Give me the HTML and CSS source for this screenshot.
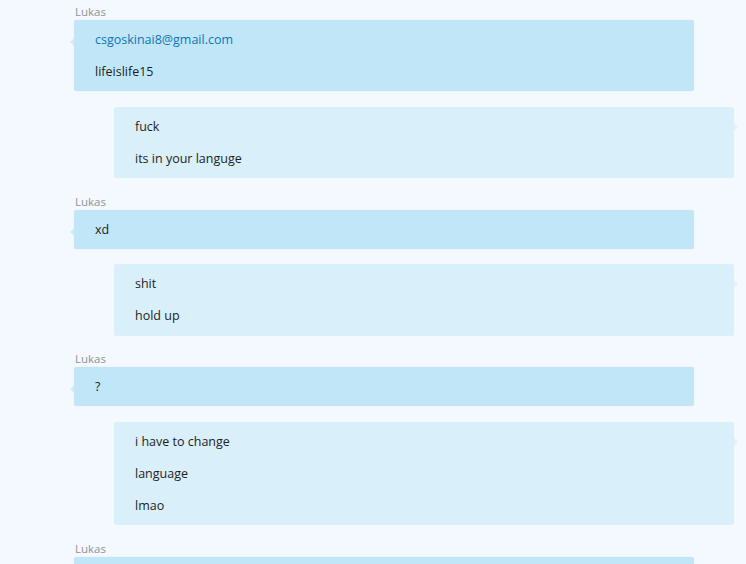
FILE: index.html
```html
<!DOCTYPE html>
<html>
<head>
<meta charset="utf-8">
<link rel="stylesheet" href="styles.css">
</head>
<body>
<div class="chat">
  <div class="sender">Lukas</div>
  <div class="bubble in">
    <div class="line"><a class="link" href="#">csgoskinai8@gmail.com</a></div>
    <div class="line">lifeislife15</div>
  </div>
  <div class="bubble out">
    <div class="line">fuck</div>
    <div class="line">its in your languge</div>
  </div>
  <div class="sender">Lukas</div>
  <div class="bubble in">
    <div class="line">xd</div>
  </div>
  <div class="bubble out">
    <div class="line">shit</div>
    <div class="line">hold up</div>
  </div>
  <div class="sender">Lukas</div>
  <div class="bubble in">
    <div class="line">?</div>
  </div>
  <div class="bubble out">
    <div class="line">i have to change</div>
    <div class="line">language</div>
    <div class="line">lmao</div>
  </div>
  <div class="sender">Lukas</div>
  <div class="bubble in">
    <div class="line">&nbsp;</div>
  </div>
</div>
</body>
</html>
```
FILE: styles.css
```css
html, body {
  margin: 0;
  padding: 0;
  background: #f3f9fe;
  overflow: hidden;
}
body {
  font-family: "Open Sans", "Noto Sans", sans-serif;
  color: #1e1e1e;
  height: 564px;
}
.chat {
  display: flex;
  flex-direction: column;
  padding: 4px 0 0 74px;
}
.sender {
  height: 16px;
  line-height: 16px;
  font-size: 11.5px;
  color: #8f9499;
  padding-left: 1px;
}
.bubble {
  position: relative;
  width: 620px;
  box-sizing: border-box;
  padding: 4px 21px 3px;
  border-radius: 3px;
  font-size: 12.5px;
}
.bubble .line {
  height: 32px;
  line-height: 32px;
  white-space: nowrap;
}
.bubble.in {
  background: #c0e6f7;
  margin-bottom: 15.5px;
  box-shadow: 0 0 1px rgba(120, 180, 210, 0.4);
}
.bubble.in::before {
  content: "";
  position: absolute;
  left: -4px;
  top: 18px;
  border-style: solid;
  border-width: 4px 4px 4px 0;
  border-color: transparent #d2ebf6 transparent transparent;
}
.bubble.out {
  background: #d9eff9;
  margin-left: 40px;
  margin-bottom: 15.5px;
  padding-bottom: 3.5px;
}
.bubble.out::after {
  content: "";
  position: absolute;
  right: -4px;
  top: 16px;
  border-style: solid;
  border-width: 4px 0 4px 4px;
  border-color: transparent transparent transparent #e3f2f9;
}
.link {
  color: #0d76b5;
  text-decoration: none;
}
```
